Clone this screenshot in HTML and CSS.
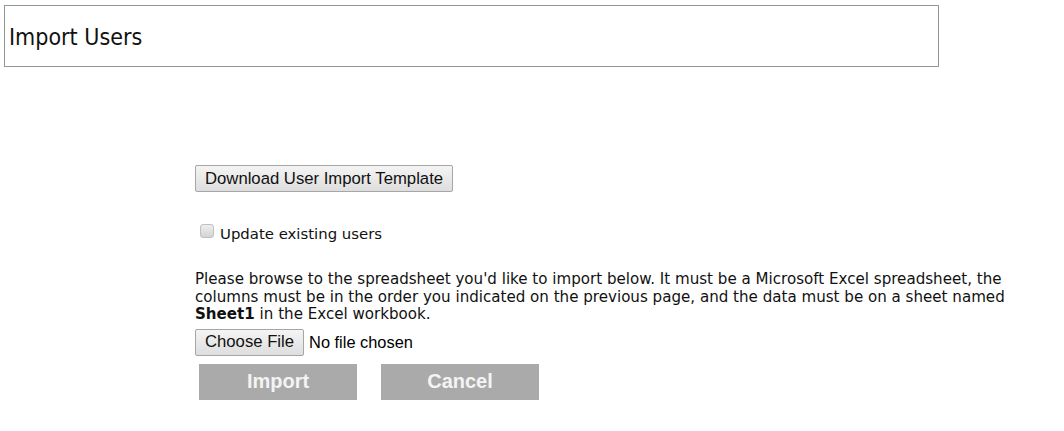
FILE: index.html
```html
<!DOCTYPE html>
<html>
<head>
<meta charset="utf-8">
<link rel="stylesheet" href="styles.css">
</head>
<body>
<div class="header"><h1 class="title">Import Users</h1></div>
<div class="content">
  <button class="btn">Download User Import Template</button>
  <label class="check"><span class="box"></span>Update existing users</label>
  <p class="info">Please browse to the spreadsheet you'd like to import below. It must be a Microsoft Excel spreadsheet, the columns must be in the order you indicated on the previous page, and the data must be on a sheet named <b>Sheet1</b> in the Excel workbook.</p>
  <div class="file"><button class="btn">Choose File</button><span class="nofile">No file chosen</span></div>
  <div class="actions">
    <span class="action">Import</span>
    <span class="action">Cancel</span>
  </div>
</div>
</body>
</html>
```
FILE: styles.css
```css
html, body { background: #fff; }
body { margin: 0; font-family: "DejaVu Sans", Verdana, sans-serif; color: #111; }
.header {
  box-sizing: border-box;
  margin: 5px 0 0 4px;
  width: 935px;
  height: 62px;
  border: 1px solid #8e979c;
  display: flex;
  align-items: center;
  padding-left: 4px;
}
.title { margin: 0; font-weight: normal; font-size: 23px; font-family: "DejaVu Sans Condensed", Tahoma, sans-serif; padding-top: 2px; }
.content { padding: 98px 0 0 195px; display: flex; flex-direction: column; align-items: flex-start; }
.btn {
  font-family: "Liberation Sans", Arial, sans-serif;
  font-size: 16.7px;
  color: #111;
  height: 27px;
  padding: 0 9px;
  border: 1px solid #a6a6a6;
  border-radius: 2px;
  background: linear-gradient(#f4f4f4, #dedede);
  margin: 0;
}
.check { display: flex; align-items: center; margin-top: 33px; font-size: 14.9px; margin-left: 5px; }
.box {
  width: 12px; height: 12px; border: 1px solid #c0c0c0; border-radius: 3px;
  background: linear-gradient(#eeeeee, #d4d4d4); margin-right: 6px; position: relative; top: -3px;
}
.info { margin: 28px 0 0; width: 830px; font-size: 15.1px; line-height: 17.5px; }
.file { display: flex; align-items: center; margin-top: 5px; }
.nofile { font-family: "Liberation Sans", Arial, sans-serif; font-size: 16.4px; margin-left: 5px; color: #000; }
.actions { display: flex; gap: 24px; margin: 8px 0 0 4px; }
.action {
  width: 158px; height: 36px;
  background: #aaaaaa;
  color: #f4f4f4;
  font-family: "Liberation Sans", Arial, sans-serif;
  font-weight: bold;
  font-size: 20px;
  display: flex; align-items: center; justify-content: center;
}
```
